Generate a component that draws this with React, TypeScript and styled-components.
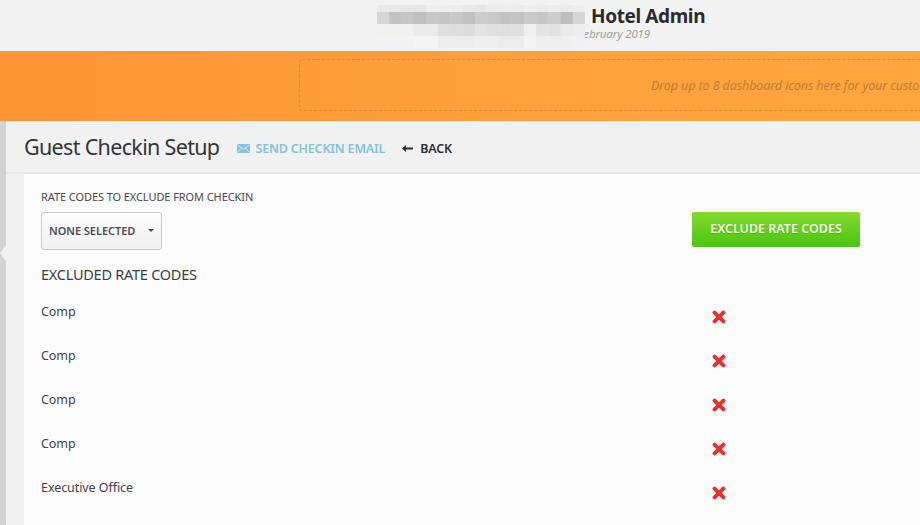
import React from 'react';
import styled, { createGlobalStyle } from 'styled-components';

const GlobalStyle = createGlobalStyle`
    html, body {
        margin: 0;
        padding: 0;
        height: 100%;
        overflow: hidden;
        background: #f4f4f4;
        font-family: "Noto Sans", "Open Sans", sans-serif;
    }
`;

const Page = styled.div`
    display: flex;
    flex-direction: column;
    width: 920px;
    height: 525px;
    overflow: hidden;
`;

const Header = styled.header`
    position: relative;
    flex: 0 0 51px;
    padding-left: 591px;
    background: conic-gradient(#f4f4f4 25%, #f1f1f1 0 50%, #f4f4f4 0 75%, #f1f1f1 0) 0 0 / 2px 2px;
`;

const HeaderTitle = styled.h1`
    margin: 0;
    padding-top: 4px;
    font-size: 19px;
    line-height: 24px;
    font-weight: 700;
    letter-spacing: -0.38px;
    color: #2b2b2e;
`;

const HeaderDate = styled.div`
    margin: -1px 0 0 -13px;
    font-size: 11.5px;
    line-height: 14px;
    font-style: italic;
    letter-spacing: -0.15px;
    color: #a0a0a0;
`;

const Mosaic = styled.svg`
    position: absolute;
    left: 377px;
    top: 5px;
`;

const Banner = styled.div`
    flex: 0 0 70px;
    box-sizing: border-box;
    padding: 8px 0 10px 299px;
    background: linear-gradient(90deg, #fd9436 0%, #fea13c 60%, #fea63e 100%);
`;

const DropZone = styled.div`
    display: flex;
    align-items: center;
    box-sizing: border-box;
    height: 52px;
    width: 700px;
    padding-left: 351px;
    border: 1px dashed #dc8a30;
    border-right: 0;
    border-radius: 3px 0 0 3px;
    font-size: 12.5px;
    font-style: italic;
    letter-spacing: -0.1px;
    white-space: nowrap;
    color: #c07f33;
`;

const Body = styled.div`
    display: flex;
    flex: 1;
    min-height: 0;
`;

const SideStrip = styled.div`
    position: relative;
    flex: 0 0 6px;
    background-color: #d2d2d2;
`;

const SideNotch = styled.div`
    position: absolute;
    right: 0;
    top: 124px;
    width: 0;
    height: 0;
    border-top: 8px solid transparent;
    border-bottom: 8px solid transparent;
    border-right: 6px solid #f1f1f1;
`;

const Main = styled.main`
    flex: 1;
    display: flex;
    flex-direction: column;
    min-width: 0;
    background: conic-gradient(#f3f3f3 25%, #efefef 0 50%, #f3f3f3 0 75%, #efefef 0) 0 0 / 2px 2px;
`;

const TitleBar = styled.div`
    display: flex;
    align-items: center;
    box-sizing: border-box;
    flex: 0 0 53px;
    padding: 2px 0 0 18px;
    border-bottom: 2px solid #e8e8e8;
`;

const PageTitle = styled.h2`
    margin: 0 18px 2px 0;
    font-size: 21.5px;
    line-height: 30px;
    font-weight: 400;
    letter-spacing: -0.67px;
    color: #333538;
`;

const TitleLink = styled.a<{ $tone: 'blue' | 'dark' }>`
    display: flex;
    align-items: center;
    gap: ${(p) => (p.$tone === 'blue' ? '5px' : '7px')};
    margin: 1px 17px 0 0;
    font-size: 12.5px;
    font-weight: 600;
    letter-spacing: -0.17px;
    white-space: nowrap;
    color: ${(p) => (p.$tone === 'blue' ? '#7fc3e0' : '#2e2e30')};
`;

const Content = styled.div`
    flex: 1;
    box-sizing: border-box;
    margin-left: 18px;
    padding: 15px 0 0 17px;
    background-color: #fcfcfc;
`;

const FieldLabel = styled.div`
    font-size: 11px;
    line-height: 15px;
    letter-spacing: -0.08px;
    color: #4a4a4d;
`;

const FilterRow = styled.div`
    display: flex;
    align-items: flex-start;
    justify-content: space-between;
    width: 819px;
    margin-top: 8px;
`;

const SelectButton = styled.button`
    display: flex;
    align-items: center;
    justify-content: space-between;
    box-sizing: border-box;
    width: 121px;
    height: 38px;
    padding: 0 7px 2px 7px;
    border: 1px solid #c9c9c9;
    border-radius: 3px;
    background: linear-gradient(#fdfdfd, #f1f1f1);
    font-family: inherit;
    font-size: 11px;
    font-weight: 600;
    letter-spacing: -0.05px;
    color: #4e4e50;
`;

const Caret = styled.span`
    width: 0;
    height: 0;
    border-top: 3px solid #444;
    border-left: 3.5px solid transparent;
    border-right: 3.5px solid transparent;
`;

const SubmitButton = styled.button`
    box-sizing: border-box;
    width: 168px;
    height: 35px;
    padding: 0 0 3px;
    border: 0;
    border-radius: 2px;
    background: linear-gradient(#86d92e, #48c60f);
    font-family: inherit;
    font-size: 12.5px;
    font-weight: 600;
    letter-spacing: 0;
    color: #f1f8e8;
    text-shadow: 0 1px 1px rgba(0, 0, 0, 0.15);
`;

const SectionTitle = styled.h3`
    margin: 14px 0 0;
    font-size: 14.5px;
    line-height: 20px;
    font-weight: 400;
    letter-spacing: -0.25px;
    color: #3e3e41;
`;

const CodeList = styled.div`
    display: flex;
    flex-direction: column;
    margin-top: 16px;
`;

const CodeRow = styled.div`
    display: grid;
    grid-template-columns: 667px 20px;
    height: 44px;
`;

const CodeName = styled.span`
    padding-top: 3px;
    font-size: 12.5px;
    line-height: 18px;
    letter-spacing: -0.07px;
    color: #434346;
`;

const RemoveIcon = styled.svg`
    margin: 10px 0 0 3.5px;
`;

const mosaicRows: { y: number; h: number; colors: string[] }[] = [
    { y: 0, h: 7, colors: ['#eaeaea', '#e8e8e8', '#e8e8e8', '#e6e6e6', '#eeeeee', '#eeeeee', '#ededed', '#e9e9e9', '#e6e6e6', '#ebebeb', '#ececec', '#ebebeb', '#eeeeee', '#ebebeb', '#ededed', '#ebebeb', '#eeeeee'] },
    { y: 7, h: 12, colors: ['#d6d6d6', '#c2c2c2', '#c6c6c6', '#c0c0c0', '#c8c8c8', '#c5c5c5', '#c9c9c9', '#c1c1c1', '#cdcdcd', '#c9c9c9', '#c3c3c3', '#c4c4c4', '#cacaca', '#c6c6c6', '#cdcdcd', '#bfbfbf', '#d6d6d6'] },
    { y: 19, h: 12, colors: ['#f1f1f0', '#f1f1f1', '#f1f1f1', '#ebebeb', '#ebebeb', '#dedede', '#dddddd', '#dcdcdc', '#e3e3e3', '#dedede', '#dedede', '#dfdfdf', '#f0f0f0', '#e4e4e4', '#e1e1e1', '#ebebeb', '#ededed'] },
    { y: 31, h: 12, colors: ['#f2f3f4', '#f2f3f4', '#f2f3f4', '#f4f5f6', '#f4f5f6', '#ecedee', '#ecedee', '#ecedee', '#eeeff0', '#eeeff0', '#ebecec', '#ebecec', '#f3f4f5', '#edeeef', '#edeeef', '#eff0f1', '#f0f1f2'] },
];

const codes = ['Comp', 'Comp', 'Comp', 'Comp', 'Executive Office'];

export default function App() {
    return (
        <Page>
            <GlobalStyle />
            <Header>
                <HeaderTitle>Hotel Admin</HeaderTitle>
                <HeaderDate>February 2019</HeaderDate>
                <Mosaic width="208" height="43" viewBox="0 0 208 43" aria-hidden="true">
                    {mosaicRows.map((row) =>
                        row.colors.map((color, i) => (
                            <rect key={`${row.y}-${i}`} x={i * 12.24} y={row.y} width="12.5" height={row.h} fill={color} />
                        )),
                    )}
                </Mosaic>
            </Header>
            <Banner>
                <DropZone>Drop up to 8 dashboard icons here for your custom shortcuts</DropZone>
            </Banner>
            <Body>
                <SideStrip>
                    <SideNotch />
                </SideStrip>
                <Main>
                    <TitleBar>
                        <PageTitle>Guest Checkin Setup</PageTitle>
                        <TitleLink $tone="blue">
                            <svg width="13" height="9" viewBox="0 0 13 9" aria-hidden="true">
                                <rect width="13" height="9" rx="0.5" fill="#7fc3e0" />
                                <path d="M0.5 0.8 6.5 5 12.5 0.8M0.5 8.4 4.6 3.8M12.5 8.4 8.4 3.8" fill="none" stroke="#e6f3f9" strokeWidth="0.8" />
                            </svg>
                            SEND CHECKIN EMAIL
                        </TitleLink>
                        <TitleLink $tone="dark">
                            <svg width="11" height="7" viewBox="0 0 11 7" aria-hidden="true">
                                <path d="M0 3.5 4 0V2.5H11V4.5H4V7Z" fill="#2e2e30" />
                            </svg>
                            BACK
                        </TitleLink>
                    </TitleBar>
                    <Content>
                        <FieldLabel>RATE CODES TO EXCLUDE FROM CHECKIN</FieldLabel>
                        <FilterRow>
                            <SelectButton>
                                NONE SELECTED
                                <Caret />
                            </SelectButton>
                            <SubmitButton>EXCLUDE RATE CODES</SubmitButton>
                        </FilterRow>
                        <SectionTitle>EXCLUDED RATE CODES</SectionTitle>
                        <CodeList>
                            {codes.map((code, i) => (
                                <CodeRow key={i}>
                                    <CodeName>{code}</CodeName>
                                    <RemoveIcon width="14" height="14" viewBox="0 0 14 14" aria-label="Remove">
                                        <path d="M2.6 2.6 11.4 11.4M11.4 2.6 2.6 11.4" stroke="#e5322f" strokeWidth="4" strokeLinecap="round" />
                                    </RemoveIcon>
                                </CodeRow>
                            ))}
                        </CodeList>
                    </Content>
                </Main>
            </Body>
        </Page>
    );
}
